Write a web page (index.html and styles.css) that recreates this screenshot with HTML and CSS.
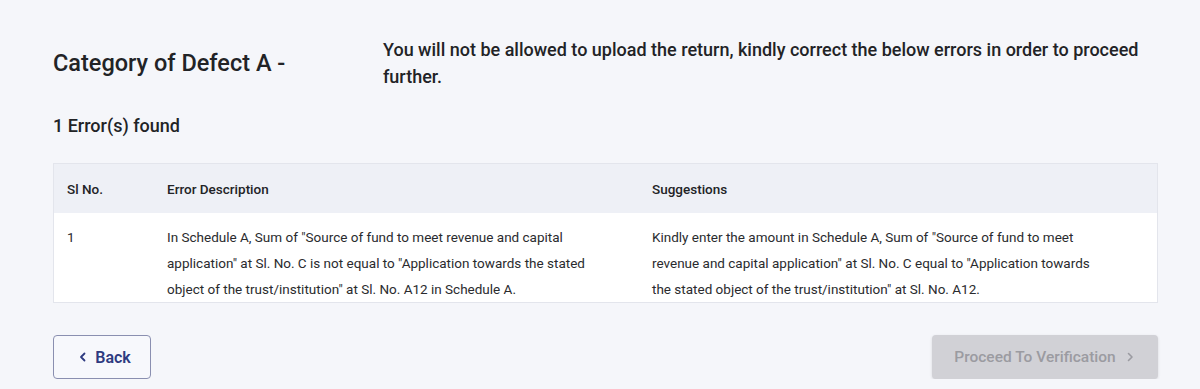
FILE: index.html
```html
<!DOCTYPE html>
<html lang="en">
<head>
    <meta charset="UTF-8">
    <meta name="viewport" content="width=device-width, initial-scale=1.0">
    <title>Error Summary</title>
    <link rel="stylesheet" href="styles.css">
</head>
<body>

<div class="page">
    <div class="defect-head">
        <h2 class="defect-title">Category of Defect A -</h2>
        <p class="defect-msg">You will not be allowed to upload the return, kindly correct the below errors in order to proceed further.</p>
    </div>

    <div class="error-count">1 Error(s) found</div>

    <div class="table-wrap">
        <table class="error-table">
            <colgroup>
                <col class="col-no">
                <col class="col-desc">
                <col class="col-sugg">
            </colgroup>
            <thead>
                <tr>
                    <th>Sl No.</th>
                    <th>Error Description</th>
                    <th>Suggestions</th>
                </tr>
            </thead>
            <tbody>
                <tr>
                    <td>1</td>
                    <td class="desc">In Schedule A, Sum of "Source of fund to meet revenue and capital application" at Sl. No. C is not equal to "Application towards the stated object of the trust/institution" at Sl. No. A12 in Schedule A.</td>
                    <td class="sugg">Kindly enter the amount in Schedule A, Sum of "Source of fund to meet revenue and capital application" at Sl. No. C equal to "Application towards the stated object of the trust/institution" at Sl. No. A12.</td>
                </tr>
            </tbody>
        </table>
    </div>

    <div class="actions">
        <button class="btn btn-back">
            <svg width="12" height="12" viewBox="0 0 12 12"><path d="M7.5 2.5 4 6l3.5 3.5" fill="none" stroke="currentColor" stroke-width="1.8" stroke-linecap="round" stroke-linejoin="round"/></svg>
            Back
        </button>
        <button class="btn btn-proceed" disabled>
            Proceed To Verification
            <svg width="12" height="12" viewBox="0 0 12 12"><path d="M4.5 2.5 8 6l-3.5 3.5" fill="none" stroke="currentColor" stroke-width="1.6" stroke-linecap="round" stroke-linejoin="round"/></svg>
        </button>
    </div>
</div>

</body>
</html>
```

FILE: styles.css
```css
body {
    margin: 0;
    background-color: #f5f6fa;
    font-family: Roboto, "Liberation Sans", Arial, sans-serif;
    color: #222326;
}

.page {
    padding: 36px 42px 0 53px;
}

.defect-head {
    display: flex;
    align-items: center;
}

.defect-title {
    margin: 0;
    width: 330px;
    flex-shrink: 0;
    font-size: 23.5px;
    font-weight: 500;
    line-height: 30px;
}

.defect-msg {
    margin: 0;
    font-size: 18px;
    font-weight: 500;
    line-height: 27px;
}

.error-count {
    margin-top: 24px;
    font-size: 18px;
    font-weight: 500;
    line-height: 24px;
}

.table-wrap {
    margin-top: 25px;
    border: 1px solid #e3e5ec;
    background-color: #ffffff;
}

.error-table {
    width: 100%;
    border-collapse: collapse;
    table-layout: fixed;
    font-size: 13.5px;
}

.col-no {
    width: 100px;
}

.col-desc {
    width: 485px;
}

.error-table th {
    background-color: #eef0f6;
    height: 49px;
    padding: 0 13px;
    text-align: left;
    font-weight: 500;
    color: #222326;
}

.error-table td {
    padding: 11px 13px 0;
    vertical-align: top;
    line-height: 26px;
    color: #2a2b2e;
}

.error-table td.desc {
    padding-right: 22px;
}

.error-table td.sugg {
    padding-right: 57px;
}

.actions {
    display: flex;
    justify-content: space-between;
    margin-top: 32px;
}

.btn {
    display: flex;
    align-items: center;
    gap: 8px;
    height: 44px;
    border-radius: 4px;
    font-family: inherit;
    font-size: 15.5px;
    font-weight: 500;
    cursor: pointer;
}

.btn-back {
    width: 98px;
    justify-content: center;
    gap: 6px;
    padding: 0 0 0 4px;
    background-color: #f7f8fc;
    border: 1px solid #8a8fb0;
    color: #2e3a80;
    font-size: 16px;
    font-weight: 600;
}

.btn-proceed {
    width: 226px;
    justify-content: center;
    background-color: #d1d1d6;
    border: none;
    color: #9b9ba1;
    box-shadow: 0 1px 3px rgba(0, 0, 0, 0.12);
    cursor: default;
}
```
